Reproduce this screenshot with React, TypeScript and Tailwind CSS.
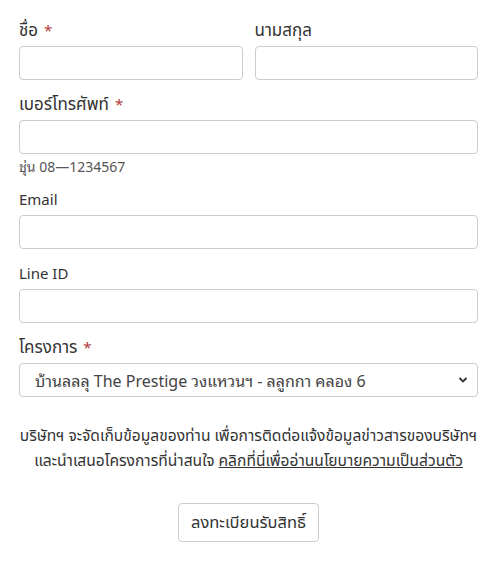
import React from "react";

const Label = ({ text, req, latin }: { text: string; req?: boolean; latin?: boolean }) => (
  <div className={`flex items-center h-[20px] mb-[6px] ${latin ? "text-[15px]" : "text-[17px]"} text-[#333] whitespace-nowrap`}>
    <span>{text}</span>
    {req && <span className="text-[#b03a3a] ml-[6px] text-[15px]">*</span>}
  </div>
);

const Input = () => (
  <input className="block w-full h-[34px] border border-[#ccc] rounded-[4px] bg-white px-3 text-[15px] outline-none" />
);

const looped = '"Noto Sans Thai Looped", "DejaVu Sans", "Noto Sans", sans-serif';

export default function App() {
  return (
    <div
      className="bg-white w-[504px] min-h-[568px] pl-[19px] pr-[26px] pt-[20px] text-[#333]"
      style={{ fontFamily: '"Noto Sans", "Noto Sans Thai", "Open Sans", sans-serif' }}
    >
      <div className="grid grid-cols-2 gap-x-[12px]">
        <div>
          <Label text="ชื่อ" req />
          <Input />
        </div>
        <div>
          <Label text="นามสกุล" />
          <Input />
        </div>
      </div>
      <div className="mt-[14px]">
        <Label text="เบอร์โทรศัพท์" req />
        <Input />
        <div className="h-[20px] flex items-center text-[14px] text-[#555] mt-[1px] whitespace-nowrap" style={{ fontFamily: looped }}>
          ชุ่น 08—1234567
        </div>
      </div>
      <div className="mt-[14px]">
        <Label text="Email" latin />
        <Input />
      </div>
      <div className="mt-[14px]">
        <Label text="Line ID" latin />
        <Input />
      </div>
      <div className="mt-[14px]">
        <Label text="โครงการ" req />
        <div className="relative">
          <div
            className="h-[34px] border border-[#ccc] rounded-[4px] bg-white pl-[15px] pr-8 flex items-center text-[16px] text-[#444] whitespace-nowrap"
            style={{ fontFamily: looped }}
          >
            บ้านลลลุ The Prestige วงแหวนฯ - ลลูกกา คลอง 6
          </div>
          <svg className="absolute right-[10px] top-[13px]" width="10" height="8" viewBox="0 0 10 8">
            <path d="M1.5 2 L5 5.5 L8.5 2" fill="none" stroke="#333" strokeWidth="1.8" />
          </svg>
        </div>
      </div>
      <div className="mt-[26px] text-center text-[15.6px] leading-[25px] text-[#333] whitespace-nowrap">
        บริษัทฯ จะจัดเก็บข้อมูลของท่าน เพื่อการติดต่อแจ้งข้อมูลข่าวสารของบริษัทฯ
        <br />
        และนำเสนอโครงการที่น่าสนใจ <span className="underline">คลิกที่นี่เพื่ออ่านนโยบายความเป็นส่วนตัว</span>
      </div>
      <div className="flex justify-center mt-[30px]">
        <button className="h-[39px] px-[12px] min-w-[139px] border border-[#ccc] rounded-[4px] bg-white text-[16.5px] text-[#333]">
          ลงทะเบียนรับสิทธิ์
        </button>
      </div>
    </div>
  );
}
